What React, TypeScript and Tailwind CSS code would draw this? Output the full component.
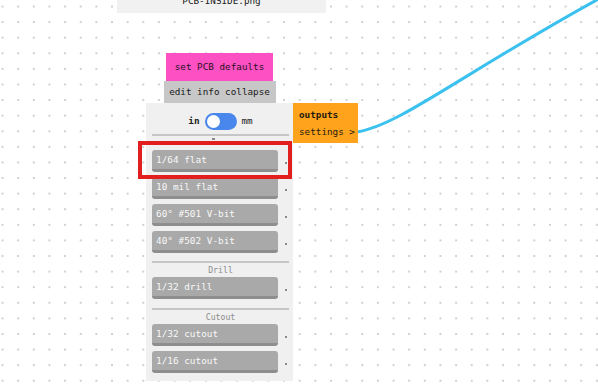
import React from "react";

const mono = "font-['DejaVu_Sans_Mono',monospace]";

function ToolButton({ label }: { label: string }) {
  return (
    <div className="flex items-start">
      <div className="w-[126px] h-[22px] rounded-[3px] bg-[#a9a9a9] border-b-[3px] border-[#8e8e8e] flex items-center pl-[4px] text-[9.4px] text-[#f8f8f8] leading-none">
        {label}
      </div>
      <div className="ml-[7px] mt-[12px] w-[2px] h-[2px] bg-[#8a8a8a]" />
    </div>
  );
}

function Section({
  label,
  items,
  first,
}: {
  label: string;
  items: string[];
  first?: boolean;
}) {
  return (
    <div className="flex flex-col">
      <div className="h-[2px] w-[137px] bg-[#c6c6c6]" />
      <div className="h-[14px] w-[137px] flex items-center justify-center text-[8.2px] text-[#8c8c8c] leading-none">
        {first ? <div className="w-[3px] h-[2px] bg-[#8a8a8a] -mt-[8px] -ml-[14px]" /> : label}
      </div>
      <div className="flex flex-col gap-[5px]">
        {items.map((it) => (
          <ToolButton key={it} label={it} />
        ))}
      </div>
    </div>
  );
}

export default function App() {
  return (
    <div
      className={`relative w-[598px] h-[385px] overflow-hidden bg-white ${mono} bg-[radial-gradient(circle,#cfcfcf_0.9px,transparent_1.1px)] bg-[size:15.65px_15.6px] bg-[position:-5.3px_-1.3px]`}
    >
      {/* wire */}
      <svg className="absolute inset-0" width="598" height="385">
        <path
          d="M357 132 C 400 125, 460 75, 602 -3"
          fill="none"
          stroke="#3bc1ef"
          strokeWidth="3"
        />
      </svg>

      {/* file node at top */}
      <div className="absolute left-[117px] top-[-11px] w-[209px] h-[24px] bg-[#f1f1f1] flex items-center justify-center text-[9.3px] text-[#222] leading-none">
        PCB-INSIDE.png
      </div>

      {/* main node */}
      <div className="absolute left-[146px] top-[53px] w-[147px] flex flex-col items-center">
        <div className="w-[107px] h-[28px] bg-[#fd50c2] flex items-center justify-center text-[9.3px] text-[#2a1020] leading-none">
          set PCB defaults
        </div>
        <div className="w-[112px] h-[22px] bg-[#c7c7c7] flex items-center justify-center text-[9.3px] text-[#1a1a1a] leading-none">
          edit info collapse
        </div>
        <div className="relative w-[147px] h-[278px] bg-[#f0f0f0] flex flex-col pl-[6px] pt-[9px]">
          {/* orange outputs tab */}
          <div className="absolute left-full top-0 w-[65px] h-[40px] bg-[#fea31b] flex flex-col justify-center pl-[6px] gap-[8px] text-[9.3px] text-[#1f1a10] leading-none">
            <span className="font-bold">outputs</span>
            <span>settings &gt;</span>
          </div>

          {/* units toggle */}
          <div className="h-[18px] w-[137px] flex items-center justify-center gap-[5px] text-[9.3px] leading-none text-[#222]">
            <span className="font-bold">in</span>
            <div className="w-[32px] h-[17px] rounded-full bg-[#4a87ec] flex items-center pl-[2px]">
              <div className="w-[13px] h-[13px] rounded-full bg-white" />
            </div>
            <span>mm</span>
          </div>

          <div className="mt-[4px]">
            <Section
              label=""
              first
              items={["1/64 flat", "10 mil flat", "60° #501 V-bit", "40° #502 V-bit"]}
            />
          </div>
          <div className="mt-[8px]">
            <Section label="Drill" items={["1/32 drill"]} />
          </div>
          <div className="mt-[9px]">
            <Section label="Cutout" items={["1/32 cutout", "1/16 cutout"]} />
          </div>
        </div>
      </div>

      {/* red highlight */}
      <div className="absolute left-[138px] top-[141px] w-[154px] h-[38px] border-[4px] border-[#e21f1f]" />
    </div>
  );
}
